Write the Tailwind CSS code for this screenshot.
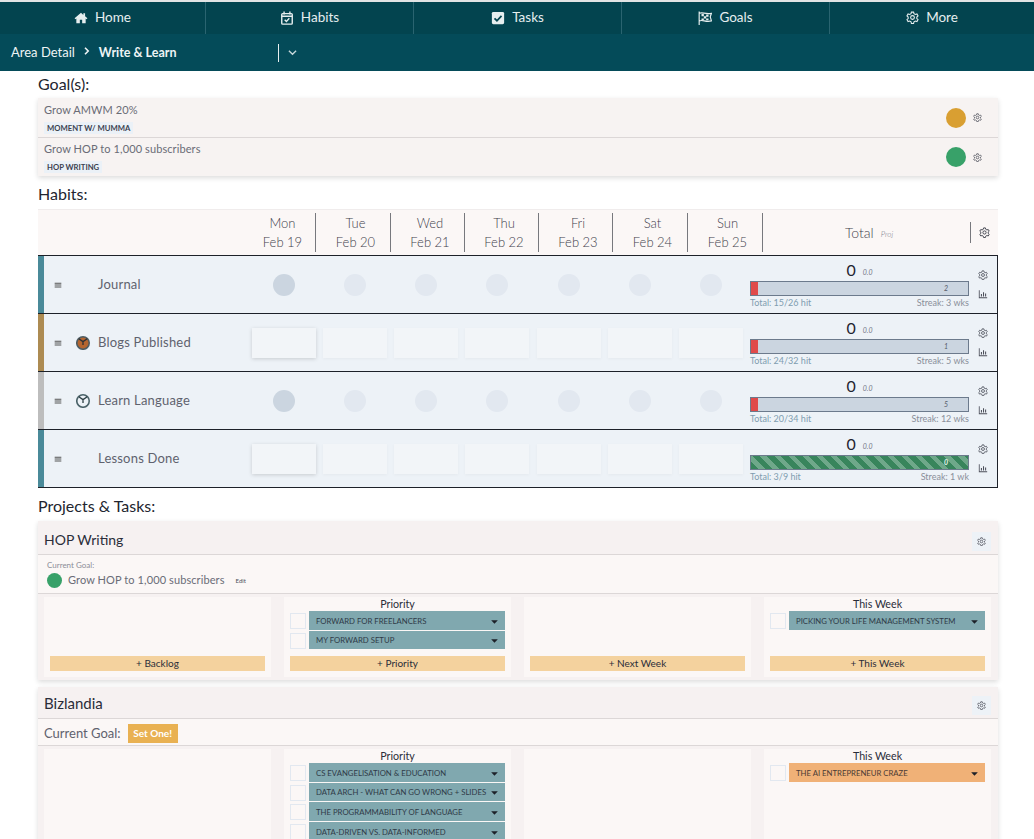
<!DOCTYPE html>
<html>
<head>
<meta charset="utf-8">
<title>Area Detail</title>
<script src="https://cdn.jsdelivr.net/npm/@tailwindcss/browser@4"></script>
</head>
<body class="h-[839px] overflow-hidden bg-white font-['Lato',sans-serif] text-[#363a47]">

<!-- shared icons -->
<svg class="hidden">
  <symbol id="cog" viewBox="0 0 24 24" fill="none" stroke="currentColor" stroke-width="2">
    <path d="M10 2h4l.7 3 2.500 1.400 3-.9 2 3.500-2.200 2.100v2.800l2.200 2.100-2 3.500-3-.9-2.500 1.400-.7 3h-4l-.7-3-2.500-1.400-3 .9-2-3.500 2.200-2.100v-2.800L1.800 9l2-3.500 3 .9L9.300 5z"/>
    <circle cx="12" cy="12" r="3.500"/>
  </symbol>
  <symbol id="chart" viewBox="0 0 24 24" fill="currentColor">
    <path d="M2 3h2v17h18v2H2z"/><path d="M7 12h2.500v6H7zM12 8h2.500v10H12zM17 11h2.500v7H17z"/>
  </symbol>
  <symbol id="bars" viewBox="0 0 12 12" fill="currentColor">
    <path d="M1 2.500h10v1.500H1zM1 5.300h10v1.500H1zM1 8.100h10v1.500H1z"/>
  </symbol>
  <symbol id="caret" viewBox="0 0 10 6" fill="currentColor">
    <path d="M0 .5h10L5 5.500z"/>
  </symbol>
</svg>

<nav class="flex h-[34px] border-t-2 border-[#e2e4e4] bg-[#03444f] text-[13.500px] text-[#e6eeef]">
  <a class="flex w-[206px] items-center justify-center gap-[7px] border-r border-[#2a6470] pb-px">
    <svg class="h-[14px] w-[14px]" viewBox="0 0 24 24" fill="currentColor"><path d="M12 3 1 12.500l1.500 1.700L4 13v8h6v-6h4v6h6v-8l1.500 1.200 1.500-1.700-4-3.500V4h-3v3z"/></svg>
    Home
  </a>
  <a class="flex w-[208px] items-center justify-center gap-[7px] border-r border-[#2a6470] pb-px">
    <svg class="h-[14px] w-[14px]" viewBox="0 0 24 24" fill="none" stroke="currentColor" stroke-width="2.400"><rect x="3" y="4.500" width="18" height="18" rx="1.500"/><path d="M7 1v5M17 1v5M3 9h18M8 15l3 3 5-5.500"/></svg>
    Habits
  </a>
  <a class="flex w-[208px] items-center justify-center gap-[7px] border-r border-[#2a6470] pb-px">
    <svg class="h-[14px] w-[14px]" viewBox="0 0 24 24"><rect x="1.500" y="1.500" width="21" height="21" rx="2.500" fill="currentColor"/><path d="m6 12.500 4.200 4.200L18 8.500" fill="none" stroke="#03444f" stroke-width="3"/></svg>
    Tasks
  </a>
  <a class="flex w-[208px] items-center justify-center gap-[7px] border-r border-[#2a6470] pb-px">
    <svg class="h-[14px] w-[14px]" viewBox="0 0 24 24" fill="none" stroke="currentColor" stroke-width="2"><path d="M2 1v23M2 4c6-3 9 2 21 0l-2 6 2 7c-10 3-15-3-21 0"/><path d="M6 5h4v4H6zM14 6h4v4h-4zM10 9h4v4h-4zM6 13h4v3H6zM14 13h4v3h-4z" fill="currentColor" stroke="none"/></svg>
    Goals
  </a>
  <a class="flex w-[204px] items-center justify-center gap-[7px] pb-px">
    <svg class="h-[13px] w-[13px]"><use href="#cog"/></svg>
    More
  </a>
</nav>

<div class="flex h-[37px] items-center bg-[#044b59] text-[#eef4f5]">
  <div class="flex w-[278px] items-center pl-[11px]">
    <span class="pt-px text-[13px]">Area Detail</span>
    <svg class="mb-1 ml-[8px] h-2 w-2" viewBox="0 0 8 8" fill="none" stroke="currentColor" stroke-width="1.600"><path d="m2 .8 3.200 3.200L2 7.200"/></svg>
    <span class="ml-[8px] pt-px text-[12.500px] font-bold">Write &amp; Learn</span>
  </div>
  <div class="h-[18px] w-px bg-[#e6eeef]"></div>
  <svg class="ml-[9px] h-[9px] w-[9px] text-[#c7d7da]" viewBox="0 0 10 10" fill="none" stroke="currentColor" stroke-width="1.500"><path d="m1 3 4 4 4-4"/></svg>
</div>

<main class="mx-[38px] w-[960px]">
  <h2 class="flex h-[27px] items-center pb-0.5 text-[16px] text-[#22252f]">Goal(s):</h2>

  <section class="bg-[#f7f3f2] shadow-[0_2px_5px_rgba(0,0,0,0.14)]">
    <div class="flex h-[40px] items-center justify-between border-b border-[#dcd7d7] pl-1.5 pr-4">
      <div class="self-start pt-[5px]">
        <p class="text-[11px] leading-[14px] tracking-[0.1px] text-[#6a6c76]">Grow AMWM 20%</p>
        <span class="mt-[5px] block w-fit bg-[#ebf1f7] px-[3px] text-[7.700px] font-bold leading-[12px] text-[#3c4250]">MOMENT W/ MUMMA</span>
      </div>
      <div class="flex items-center gap-[7px]">
        <span class="h-5 w-5 rounded-full bg-[#d99f32]"></span>
        <svg class="h-[9px] w-[9px] text-[#4c4f5a]"><use href="#cog"/></svg>
      </div>
    </div>
    <div class="flex h-[38px] items-center justify-between pl-1.5 pr-4">
      <div class="self-start pt-[4px]">
        <p class="text-[11px] leading-[14px] tracking-[0.1px] text-[#6a6c76]">Grow HOP to 1,000 subscribers</p>
        <span class="mt-[5px] block w-fit bg-[#ebf1f7] px-[3px] text-[7.700px] font-bold leading-[12px] text-[#3c4250]">HOP WRITING</span>
      </div>
      <div class="flex items-center gap-[7px]">
        <span class="h-5 w-5 rounded-full bg-[#38a169]"></span>
        <svg class="h-[9px] w-[9px] text-[#4c4f5a]"><use href="#cog"/></svg>
      </div>
    </div>
  </section>

  <h2 class="mt-[5px] flex h-7 items-center pb-0.5 text-[16px] text-[#22252f]">Habits:</h2>

  <!-- habit table -->
  <section>
    <div class="flex h-[46px] items-center border-t border-[#f0ecec] bg-[#fbf7f6] text-[13px] font-light leading-[19px] text-[#3f414c]">
      <div class="w-[207px]"></div>
      <div class="flex h-[39px] w-[71px] flex-col items-center justify-center border-r border-[#77787d] pl-[5px]"><span>Mon</span><span>Feb 19</span></div>
      <div class="flex h-[39px] w-[75px] flex-col items-center justify-center border-r border-[#77787d] pl-[5px]"><span>Tue</span><span>Feb 20</span></div>
      <div class="flex h-[39px] w-[74px] flex-col items-center justify-center border-r border-[#77787d] pl-[5px]"><span>Wed</span><span>Feb 21</span></div>
      <div class="flex h-[39px] w-[74px] flex-col items-center justify-center border-r border-[#77787d] pl-[5px]"><span>Thu</span><span>Feb 22</span></div>
      <div class="flex h-[39px] w-[74px] flex-col items-center justify-center border-r border-[#77787d] pl-[5px]"><span>Fri</span><span>Feb 23</span></div>
      <div class="flex h-[39px] w-[75px] flex-col items-center justify-center border-r border-[#77787d] pl-[5px]"><span>Sat</span><span>Feb 24</span></div>
      <div class="flex h-[39px] w-[75px] flex-col items-center justify-center border-r border-[#77787d] pl-[5px]"><span>Sun</span><span>Feb 25</span></div>
      <div class="flex h-[21px] w-[208px] items-center justify-center gap-[7px] border-r border-[#77787d] pl-[5px]">
        <span class="text-[14px]">Total</span><i class="mt-1 text-[8px] text-[#777a88]">Proj</i>
      </div>
      <svg class="ml-2 h-[11px] w-[11px] text-[#3a3d48]"><use href="#cog"/></svg>
    </div>

    <!-- Journal -->
    <div class="flex h-[58px] items-center border-t border-r border-[#1d2129] bg-[#edf2f7]">
      <div class="h-full w-1.5 bg-[#4a8a99]"></div>
      <svg class="ml-2.5 h-2 w-2 text-[#555]"><use href="#bars"/></svg>
      <div class="ml-[11px] w-5"></div>
      <span class="ml-[5px] w-[150px] pt-px text-[13px] tracking-[0.2px] text-[#5f626e]">Journal</span>
      <div class="grid w-[499px] grid-cols-7 justify-items-center">
        <span class="h-[22px] w-[22px] rounded-full bg-[#cbd5e0]"></span>
        <span class="h-[22px] w-[22px] rounded-full bg-[#e2e8f0]"></span>
        <span class="h-[22px] w-[22px] rounded-full bg-[#e2e8f0]"></span>
        <span class="h-[22px] w-[22px] rounded-full bg-[#e2e8f0]"></span>
        <span class="h-[22px] w-[22px] rounded-full bg-[#e2e8f0]"></span>
        <span class="h-[22px] w-[22px] rounded-full bg-[#e2e8f0]"></span>
        <span class="h-[22px] w-[22px] rounded-full bg-[#e2e8f0]"></span>
      </div>
      <div class="ml-[3px] w-[219px]">
        <div class="flex h-[19px] items-end justify-center gap-[7px]"><span class="text-[16px] leading-[20px] text-[#1f2430]">0</span><i class="mb-[3px] text-[7px] leading-[9px] text-[#777a88]">0.0</i></div>
        <div class="mt-px flex h-[15px] items-center justify-between border border-[#6c7a8c] bg-[#cbd5e0] pr-[20px]"><span class="h-full w-[7px] bg-[#e04a4a]"></span><i class="text-[7px] text-[#555b68]">2</i></div>
        <div class="flex justify-between text-[9px] leading-[13px]"><span class="text-[#7f9db0]">Total: 15/26 hit</span><span class="text-[#8a8f9a]">Streak: 3 wks</span></div>
      </div>
      <div class="ml-[9px] flex flex-col items-center gap-[9px] text-[#4c4f5a]">
        <svg class="h-2.5 w-2.5"><use href="#cog"/></svg>
        <svg class="h-2.5 w-2.5"><use href="#chart"/></svg>
      </div>
    </div>

    <!-- Blogs Published -->
    <div class="flex h-[58px] items-center border-t border-r border-[#1d2129] bg-[#edf2f7]">
      <div class="h-full w-1.5 bg-[#ad8b52]"></div>
      <svg class="ml-2.5 h-2 w-2 text-[#555]"><use href="#bars"/></svg>
      <svg class="ml-[11px] h-5 w-5 p-[2.500px]" viewBox="0 0 16 16"><circle cx="8" cy="8" r="7.500" fill="#4d5c62"/><circle cx="8" cy="8" r="5.800" fill="#b5652e"/><path d="m3.500 3.500 4.500 3 4.500-3M8 6.500V10" fill="none" stroke="#2d3034" stroke-width="1.400"/></svg>
      <span class="ml-[5px] w-[150px] pt-px text-[13px] tracking-[0.2px] text-[#5f626e]">Blogs Published</span>
      <div class="grid w-[499px] grid-cols-7 justify-items-center">
        <span class="h-[30px] w-[64px] bg-[#f2f5f8] shadow-[0_1px_4px_rgba(0,0,0,0.16)]"></span>
        <span class="h-[30px] w-[64px] bg-[#f2f5f8] shadow-[0_1px_3px_rgba(0,0,0,0.04)]"></span>
        <span class="h-[30px] w-[64px] bg-[#f2f5f8] shadow-[0_1px_3px_rgba(0,0,0,0.04)]"></span>
        <span class="h-[30px] w-[64px] bg-[#f2f5f8] shadow-[0_1px_3px_rgba(0,0,0,0.04)]"></span>
        <span class="h-[30px] w-[64px] bg-[#f2f5f8] shadow-[0_1px_3px_rgba(0,0,0,0.04)]"></span>
        <span class="h-[30px] w-[64px] bg-[#f2f5f8] shadow-[0_1px_3px_rgba(0,0,0,0.04)]"></span>
        <span class="h-[30px] w-[64px] bg-[#f2f5f8] shadow-[0_1px_3px_rgba(0,0,0,0.04)]"></span>
      </div>
      <div class="ml-[3px] w-[219px]">
        <div class="flex h-[19px] items-end justify-center gap-[7px]"><span class="text-[16px] leading-[20px] text-[#1f2430]">0</span><i class="mb-[3px] text-[7px] leading-[9px] text-[#777a88]">0.0</i></div>
        <div class="mt-px flex h-[15px] items-center justify-between border border-[#6c7a8c] bg-[#cbd5e0] pr-[20px]"><span class="h-full w-[7px] bg-[#e04a4a]"></span><i class="text-[7px] text-[#555b68]">1</i></div>
        <div class="flex justify-between text-[9px] leading-[13px]"><span class="text-[#7f9db0]">Total: 24/32 hit</span><span class="text-[#8a8f9a]">Streak: 5 wks</span></div>
      </div>
      <div class="ml-[9px] flex flex-col items-center gap-[9px] text-[#4c4f5a]">
        <svg class="h-2.5 w-2.5"><use href="#cog"/></svg>
        <svg class="h-2.5 w-2.5"><use href="#chart"/></svg>
      </div>
    </div>

    <!-- Learn Language -->
    <div class="flex h-[58px] items-center border-t border-r border-[#1d2129] bg-[#edf2f7]">
      <div class="h-full w-1.5 bg-[#bdbdbd]"></div>
      <svg class="ml-2.5 h-2 w-2 text-[#555]"><use href="#bars"/></svg>
      <svg class="ml-[11px] h-5 w-5 p-[2.500px]" viewBox="0 0 16 16"><circle cx="8" cy="8" r="7.500" fill="#4a6268"/><circle cx="8" cy="8" r="5.800" fill="#edf2f7"/><path d="m3.500 3.500 4.500 3 4.500-3M8 6.500V10" fill="none" stroke="#2d3f44" stroke-width="1.400"/></svg>
      <span class="ml-[5px] w-[150px] pt-px text-[13px] tracking-[0.2px] text-[#5f626e]">Learn Language</span>
      <div class="grid w-[499px] grid-cols-7 justify-items-center">
        <span class="h-[22px] w-[22px] rounded-full bg-[#cbd5e0]"></span>
        <span class="h-[22px] w-[22px] rounded-full bg-[#e2e8f0]"></span>
        <span class="h-[22px] w-[22px] rounded-full bg-[#e2e8f0]"></span>
        <span class="h-[22px] w-[22px] rounded-full bg-[#e2e8f0]"></span>
        <span class="h-[22px] w-[22px] rounded-full bg-[#e2e8f0]"></span>
        <span class="h-[22px] w-[22px] rounded-full bg-[#e2e8f0]"></span>
        <span class="h-[22px] w-[22px] rounded-full bg-[#e2e8f0]"></span>
      </div>
      <div class="ml-[3px] w-[219px]">
        <div class="flex h-[19px] items-end justify-center gap-[7px]"><span class="text-[16px] leading-[20px] text-[#1f2430]">0</span><i class="mb-[3px] text-[7px] leading-[9px] text-[#777a88]">0.0</i></div>
        <div class="mt-px flex h-[15px] items-center justify-between border border-[#6c7a8c] bg-[#cbd5e0] pr-[20px]"><span class="h-full w-[7px] bg-[#e04a4a]"></span><i class="text-[7px] text-[#555b68]">5</i></div>
        <div class="flex justify-between text-[9px] leading-[13px]"><span class="text-[#7f9db0]">Total: 20/34 hit</span><span class="text-[#8a8f9a]">Streak: 12 wks</span></div>
      </div>
      <div class="ml-[9px] flex flex-col items-center gap-[9px] text-[#4c4f5a]">
        <svg class="h-2.5 w-2.5"><use href="#cog"/></svg>
        <svg class="h-2.5 w-2.5"><use href="#chart"/></svg>
      </div>
    </div>

    <!-- Lessons Done -->
    <div class="flex h-[59px] items-center border-y border-r border-[#1d2129] bg-[#edf2f7]">
      <div class="h-full w-1.5 bg-[#4a8a99]"></div>
      <svg class="ml-2.5 h-2 w-2 text-[#555]"><use href="#bars"/></svg>
      <div class="ml-[11px] w-5"></div>
      <span class="ml-[5px] w-[150px] pt-px text-[13px] tracking-[0.2px] text-[#5f626e]">Lessons Done</span>
      <div class="grid w-[499px] grid-cols-7 justify-items-center">
        <span class="h-[30px] w-[64px] bg-[#f2f5f8] shadow-[0_1px_4px_rgba(0,0,0,0.16)]"></span>
        <span class="h-[30px] w-[64px] bg-[#f2f5f8] shadow-[0_1px_3px_rgba(0,0,0,0.04)]"></span>
        <span class="h-[30px] w-[64px] bg-[#f2f5f8] shadow-[0_1px_3px_rgba(0,0,0,0.04)]"></span>
        <span class="h-[30px] w-[64px] bg-[#f2f5f8] shadow-[0_1px_3px_rgba(0,0,0,0.04)]"></span>
        <span class="h-[30px] w-[64px] bg-[#f2f5f8] shadow-[0_1px_3px_rgba(0,0,0,0.04)]"></span>
        <span class="h-[30px] w-[64px] bg-[#f2f5f8] shadow-[0_1px_3px_rgba(0,0,0,0.04)]"></span>
        <span class="h-[30px] w-[64px] bg-[#f2f5f8] shadow-[0_1px_3px_rgba(0,0,0,0.04)]"></span>
      </div>
      <div class="ml-[3px] w-[219px]">
        <div class="flex h-[19px] items-end justify-center gap-[7px]"><span class="text-[16px] leading-[20px] text-[#1f2430]">0</span><i class="mb-[3px] text-[7px] leading-[9px] text-[#777a88]">0.0</i></div>
        <div class="mt-px flex h-[15px] items-center justify-end border border-[#6c7a8c] bg-[repeating-linear-gradient(45deg,#38855c,#38855c_5.500px,#6fa88a_5.500px,#6fa88a_10px)] pr-[20px]"><i class="text-[7px] font-bold text-[#e6f5ec]">0</i></div>
        <div class="flex justify-between text-[9px] leading-[13px]"><span class="text-[#7f9db0]">Total: 3/9 hit</span><span class="text-[#8a8f9a]">Streak: 1 wk</span></div>
      </div>
      <div class="ml-[9px] flex flex-col items-center gap-[9px] text-[#4c4f5a]">
        <svg class="h-2.5 w-2.5"><use href="#cog"/></svg>
        <svg class="h-2.5 w-2.5"><use href="#chart"/></svg>
      </div>
    </div>
  </section>

  <h2 class="mt-[4px] flex h-7 items-center text-[16px] text-[#22252f]">Projects &amp; Tasks:</h2>

  <!-- HOP Writing -->
  <section class="mt-[1px] bg-[#f6f1f1] shadow-[0_2px_5px_rgba(0,0,0,0.14)]">
    <div class="flex h-[34px] items-center justify-between border-b border-[#dcd7d7] pl-1.5 pr-[7px]">
      <h3 class="pt-[4px] text-[14px] text-[#2a2d39]">HOP Writing</h3>
      <span class="mt-2 flex h-[19px] w-[19px] items-center justify-center bg-[#edf2f7] text-[#4c4f5a]"><svg class="h-[9px] w-[9px]"><use href="#cog"/></svg></span>
    </div>
    <div class="h-[39px] border-b border-[#dcd7d7] bg-[#fbf7f6] pl-[9px]">
      <p class="pt-[5px] text-[8px] leading-[11px] text-[#8b8d97]">Current Goal:</p>
      <div class="mt-px flex items-center">
        <span class="h-[15px] w-[15px] rounded-full bg-[#38a169]"></span>
        <span class="ml-1.5 text-[11px] tracking-[0.1px] text-[#6a6c76]">Grow HOP to 1,000 subscribers</span>
        <span class="ml-[11px] text-[6px] text-[#4c4f5a]">Edit</span>
      </div>
    </div>
    <div class="grid grid-cols-[repeat(4,227px)] gap-[13px] px-1.5 pb-[3px] pt-[3px]">
      <div class="flex h-[80px] flex-col bg-[#fbf7f6] px-1.5 pb-1.5">
        <button class="mt-auto h-[15px] bg-[#f4d29e] text-[10px] leading-[15px] text-[#2a2d39]">+ Backlog</button>
      </div>
      <div class="flex h-[80px] flex-col bg-[#fbf7f6] px-1.5 pb-1.5">
        <h4 class="text-center text-[10.700px] leading-[14px] text-[#2a2d39]">Priority</h4>
        <div class="flex gap-[3px] pb-px">
          <span class="mt-0.5 h-4 w-4 border border-[#e2e8f0]"></span>
          <div class="flex h-[19px] flex-1 items-center justify-between bg-[#80a8af] px-[7px] pt-[3px] text-[7.750px] text-[#2f3a47]">FORWARD FOR FREELANCERS<svg class="h-1 w-[7px] text-[#1d2129]"><use href="#caret"/></svg></div>
        </div>
        <div class="flex gap-[3px]">
          <span class="mt-0.5 h-4 w-4 border border-[#e2e8f0]"></span>
          <div class="flex h-[18px] flex-1 items-center justify-between bg-[#80a8af] px-[7px] pt-[2px] text-[7.750px] text-[#2f3a47]">MY FORWARD SETUP<svg class="h-1 w-[7px] text-[#1d2129]"><use href="#caret"/></svg></div>
        </div>
        <button class="mt-auto h-[15px] bg-[#f4d29e] text-[10px] leading-[15px] text-[#2a2d39]">+ Priority</button>
      </div>
      <div class="flex h-[80px] flex-col bg-[#fbf7f6] px-1.5 pb-1.5">
        <button class="mt-auto h-[15px] bg-[#f4d29e] text-[10px] leading-[15px] text-[#2a2d39]">+ Next Week</button>
      </div>
      <div class="flex h-[80px] flex-col bg-[#fbf7f6] px-1.5 pb-1.5">
        <h4 class="text-center text-[10.700px] leading-[14px] text-[#2a2d39]">This Week</h4>
        <div class="flex gap-[3px]">
          <span class="mt-0.5 h-4 w-4 border border-[#e2e8f0]"></span>
          <div class="flex h-[19px] flex-1 items-center justify-between bg-[#80a8af] px-[7px] pt-[3px] text-[7.750px] text-[#2f3a47]">PICKING YOUR LIFE MANAGEMENT SYSTEM<svg class="h-1 w-[7px] text-[#1d2129]"><use href="#caret"/></svg></div>
        </div>
        <button class="mt-auto h-[15px] bg-[#f4d29e] text-[10px] leading-[15px] text-[#2a2d39]">+ This Week</button>
      </div>
    </div>
  </section>

  <!-- Bizlandia -->
  <section class="mt-[7px] bg-[#f6f1f1] shadow-[0_2px_5px_rgba(0,0,0,0.14)]">
    <div class="flex h-[32px] items-center justify-between border-b border-[#dcd7d7] pl-1.5 pr-[7px]">
      <h3 class="pt-px text-[15px] text-[#2a2d39]">Bizlandia</h3>
      <span class="mt-[5px] flex h-[19px] w-[19px] items-center justify-center bg-[#edf2f7] text-[#4c4f5a]"><svg class="h-[9px] w-[9px]"><use href="#cog"/></svg></span>
    </div>
    <div class="flex h-[27px] items-center border-b border-[#dcd7d7] bg-[#fbf7f6] pl-1.5 pt-[2px]">
      <span class="pt-px text-[13px] text-[#5f626e]">Current Goal:</span>
      <span class="ml-[7px] flex h-[19px] w-[50px] items-center justify-center bg-[#e9b152] text-[10px] font-bold text-white">Set One!</span>
    </div>
    <div class="grid grid-cols-[repeat(4,227px)] gap-[13px] px-1.5 pt-[3px]">
      <div class="h-[100px] bg-[#fbf7f6]"></div>
      <div class="flex h-[100px] flex-col bg-[#fbf7f6] px-1.5">
        <h4 class="text-center text-[10.700px] leading-[14px] text-[#2a2d39]">Priority</h4>
        <div class="flex gap-[3px] pb-px">
          <span class="mt-0.5 h-4 w-4 border border-[#e2e8f0]"></span>
          <div class="flex h-[19px] flex-1 items-center justify-between bg-[#80a8af] px-[7px] pt-[3px] text-[7.750px] text-[#2f3a47]">CS EVANGELISATION &amp; EDUCATION<svg class="h-1 w-[7px] text-[#1d2129]"><use href="#caret"/></svg></div>
        </div>
        <div class="flex gap-[3px] pb-px">
          <span class="mt-0.5 h-4 w-4 border border-[#e2e8f0]"></span>
          <div class="flex h-[18px] flex-1 items-center justify-between bg-[#80a8af] px-[7px] pt-[2px] text-[7.750px] text-[#2f3a47]">DATA ARCH - WHAT CAN GO WRONG + SLIDES<svg class="h-1 w-[7px] text-[#1d2129]"><use href="#caret"/></svg></div>
        </div>
        <div class="flex gap-[3px] pb-px">
          <span class="mt-0.5 h-4 w-4 border border-[#e2e8f0]"></span>
          <div class="flex h-[19px] flex-1 items-center justify-between bg-[#80a8af] px-[7px] pt-[3px] text-[7.750px] text-[#2f3a47]">THE PROGRAMMABILITY OF LANGUAGE<svg class="h-1 w-[7px] text-[#1d2129]"><use href="#caret"/></svg></div>
        </div>
        <div class="flex gap-[3px]">
          <span class="mt-0.5 h-4 w-4 border border-[#e2e8f0]"></span>
          <div class="flex h-[19px] flex-1 items-center justify-between bg-[#80a8af] px-[7px] pt-[3px] text-[7.750px] text-[#2f3a47]">DATA-DRIVEN VS. DATA-INFORMED<svg class="h-1 w-[7px] text-[#1d2129]"><use href="#caret"/></svg></div>
        </div>
      </div>
      <div class="h-[100px] bg-[#fbf7f6]"></div>
      <div class="flex h-[100px] flex-col bg-[#fbf7f6] px-1.5">
        <h4 class="text-center text-[10.700px] leading-[14px] text-[#2a2d39]">This Week</h4>
        <div class="flex gap-[3px]">
          <span class="mt-0.5 h-4 w-4 border border-[#e2e8f0]"></span>
          <div class="flex h-[19px] flex-1 items-center justify-between bg-[#f0b177] px-[7px] pt-[3px] text-[7.750px] text-[#4b3b35]">THE AI ENTREPRENEUR CRAZE<svg class="h-1 w-[7px] text-[#1d2129]"><use href="#caret"/></svg></div>
        </div>
      </div>
    </div>
  </section>
</main>
</body>
</html>
